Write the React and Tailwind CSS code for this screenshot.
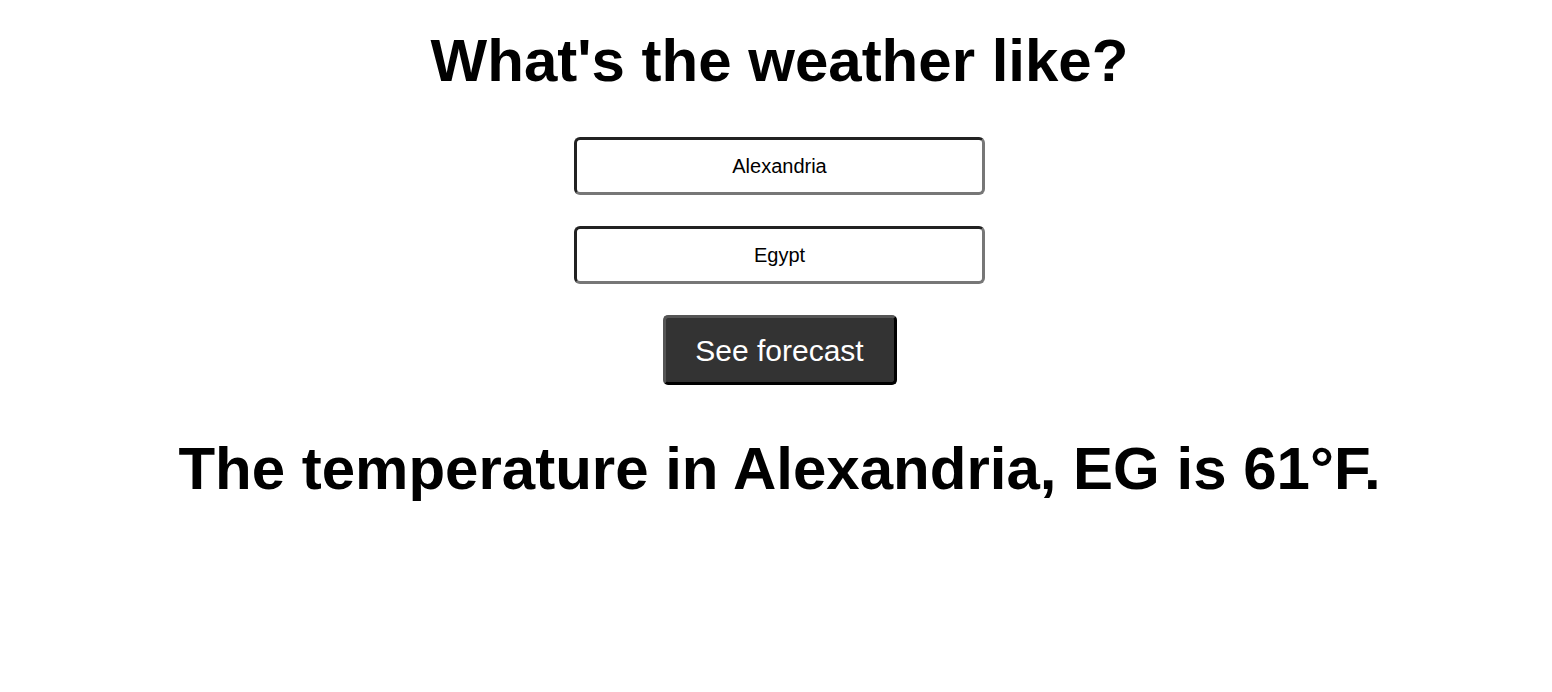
export default function App() {
  return (
    <div className="min-h-screen bg-white flex flex-col items-center pl-[7px] font-['Liberation_Sans',Arial,sans-serif] text-black">
      <h1 className="mt-[31px] text-[60px] leading-none font-bold">What's the weather like?</h1>

      <input
        defaultValue="Alexandria"
        className="mt-[46px] w-[411px] h-[58px] rounded-[6px] border-[3px] border-t-[#222] border-l-[#222] border-b-[#777] border-r-[#777] text-center text-[20px] text-black outline-none"
      />
      <input
        defaultValue="Egypt"
        className="mt-[31px] w-[411px] h-[58px] rounded-[6px] border-[3px] border-t-[#222] border-l-[#222] border-b-[#777] border-r-[#777] text-center text-[20px] text-black outline-none"
      />

      <button className="mt-[31px] w-[234px] h-[70px] rounded-[5px] bg-[#333] text-white text-[30px] border-[3px] border-t-[#555] border-l-[#555] border-b-black border-r-black">
        See forecast
      </button>

      <h2 className="mt-[54px] text-[60px] leading-none font-bold">The temperature in Alexandria, EG is 61°F.</h2>
    </div>
  );
}
